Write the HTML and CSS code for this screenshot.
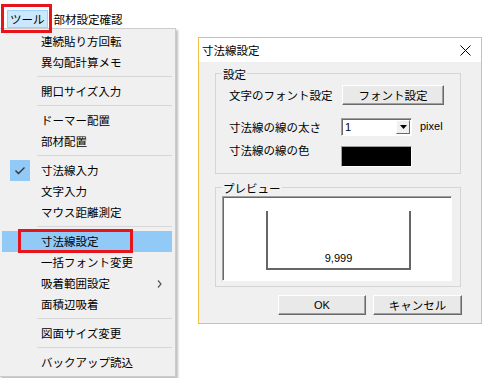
FILE: index.html
```html
<!DOCTYPE html>
<html lang="ja">
<head>
    <meta charset="UTF-8">
    <meta name="viewport" content="width=device-width, initial-scale=1.0">
    <title>寸法線設定</title>
    <link rel="stylesheet" href="styles.css">
</head>
<body>
    <div class="screen">
        <div class="menu-area">
            <div class="menubar">
                <div class="mb-item active">ツール</div>
                <div class="mb-item">部材設定確認</div>
            </div>
            <div class="mark mark-menubar"></div>

            <div class="menu">
                <div class="mi"><span class="mi-icon"></span>連続貼り方回転</div>
                <div class="mi"><span class="mi-icon"></span>異勾配計算メモ</div>
                <div class="sep"></div>
                <div class="mi"><span class="mi-icon"></span>開口サイズ入力</div>
                <div class="sep"></div>
                <div class="mi"><span class="mi-icon"></span>ドーマー配置</div>
                <div class="mi"><span class="mi-icon"></span>部材配置</div>
                <div class="sep"></div>
                <div class="mi">
                    <span class="mi-icon checked">
                        <svg width="20" height="21" viewBox="0 0 20 21"><polyline points="5.5,10.5 8.5,13.5 14.5,7.5" fill="none" stroke="#333" stroke-width="1.4"/></svg>
                    </span>寸法線入力
                </div>
                <div class="mi"><span class="mi-icon"></span>文字入力</div>
                <div class="mi"><span class="mi-icon"></span>マウス距離測定</div>
                <div class="sep"></div>
                <div class="mi hover"><span class="mi-icon"></span>寸法線設定<span class="mark mark-item"></span></div>
                <div class="mi"><span class="mi-icon"></span>一括フォント変更</div>
                <div class="mi">
                    <span class="mi-icon"></span>吸着範囲設定
                    <svg class="mi-arrow" width="5" height="8" viewBox="0 0 5 8"><polyline points="1,0.5 4,4 1,7.5" fill="none" stroke="#555" stroke-width="1.2"/></svg>
                </div>
                <div class="mi"><span class="mi-icon"></span>面積辺吸着</div>
                <div class="sep"></div>
                <div class="mi"><span class="mi-icon"></span>図面サイズ変更</div>
                <div class="sep"></div>
                <div class="mi"><span class="mi-icon"></span>バックアップ読込</div>
            </div>
        </div>

        <div class="dialog">
            <div class="titlebar">
                <span class="title">寸法線設定</span>
                <svg class="close" width="11" height="11" viewBox="0 0 11 11"><path d="M0.5 0.5 L10.5 10.5 M10.5 0.5 L0.5 10.5" stroke="#000" stroke-width="1"/></svg>
            </div>
            <div class="dlg-body">
                <div class="group group-settings">
                    <div class="group-title">設定</div>
                    <div class="row row-font">
                        <span class="row-label">文字のフォント設定</span>
                        <div class="btn btn-font">フォント設定</div>
                    </div>
                    <div class="row row-width">
                        <span class="row-label">寸法線の線の太さ</span>
                        <div class="combo">
                            <span class="combo-value">1</span>
                            <span class="combo-btn">
                                <svg width="7" height="4" viewBox="0 0 7 4"><polygon points="0,0 7,0 3.5,4" fill="#000"/></svg>
                            </span>
                        </div>
                        <span class="unit">pixel</span>
                    </div>
                    <div class="row row-color">
                        <span class="row-label">寸法線の線の色</span>
                        <div class="swatch"></div>
                    </div>
                </div>

                <div class="group group-preview">
                    <div class="group-title">プレビュー</div>
                    <div class="preview">
                        <div class="dim-bracket">9,999</div>
                    </div>
                </div>

                <div class="actions">
                    <div class="btn btn-ok">OK</div>
                    <div class="btn btn-cancel">キャンセル</div>
                </div>
            </div>
        </div>
    </div>
</body>
</html>
```

FILE: styles.css
```css
body {
    margin: 0;
    background-color: #fff;
    font-family: "Noto Sans CJK JP", "Liberation Sans", sans-serif;
    font-size: 11.5px;
    color: #000;
}
.screen {
    display: flex;
    align-items: flex-start;
    width: 482px;
    height: 378px;
    overflow: hidden;
}

/* menu bar + dropdown */
.menu-area {
    position: relative;
    width: 176px;
}
.menubar {
    display: flex;
    height: 28px;
    padding: 10px 0 0 7px;
    box-sizing: border-box;
}
.mb-item {
    height: 18px;
    line-height: 18px;
    padding: 0 6px;
}
.mb-item.active {
    padding: 0 3px;
    background-color: #cce8ff;
    box-shadow: inset 0 0 0 1px #99d1ff;
}
.mark {
    position: absolute;
    border: 3px solid #e8141b;
    box-sizing: border-box;
    z-index: 2;
}
.mark-menubar {
    left: 1px;
    top: 4px;
    width: 51px;
    height: 29px;
}
.menu {
    width: 177px;
    margin-left: -1px;
    padding: 2px 0 3px;
    background-color: #f0f0f0;
    border: 1px solid #cccccc;
    box-sizing: border-box;
    box-shadow: 2px 2px 2px rgba(0, 0, 0, 0.25);
}
.mi {
    position: relative;
    display: flex;
    align-items: center;
    height: 21px;
    margin: 0 3px 0 2px;
    line-height: 21px;
}
.mi.hover {
    background-color: #91c9f7;
}
.mi-icon {
    display: block;
    width: 20px;
    height: 21px;
    margin: 0 11px 0 8px;
}
.mi-icon.checked {
    background-color: #91c9f7;
}
.mi-icon svg {
    display: block;
}
.mi-arrow {
    margin: 0 10px 0 auto;
}
.mark-item {
    left: 16px;
    top: -2px;
    width: 115px;
    height: 24px;
}
.sep {
    height: 1px;
    margin: 3px 3px 4px 37px;
    background-color: #d7d7d7;
}

/* dialog */
.dialog {
    width: 284px;
    height: 287px;
    margin: 37px 0 0 22px;
    border: 1px solid #f2c046;
    box-sizing: border-box;
    background-color: #f0f0f0;
}
.titlebar {
    display: flex;
    align-items: center;
    height: 24px;
    padding: 0 10px 0 3px;
    background-color: #fff;
}
.title {
    flex: 1;
}
.dlg-body {
    padding: 11px 20px 0 16px;
}
.group {
    border: 1px solid #d5d5d5;
}
.group-title {
    width: fit-content;
    margin-top: -8px;
    padding: 0 1px;
    line-height: 16px;
    background-color: #f0f0f0;
}
.group-settings {
    padding: 0 0 6px 13px;
}
.group-settings .group-title {
    margin-left: -7px;
}
.row {
    display: flex;
    align-items: center;
}
.row-label {
    width: 112px;
    line-height: 16px;
}
.row-font {
    height: 20px;
    margin-top: 3px;
}
.row-width {
    height: 18px;
    margin-top: 13px;
}
.row-color {
    align-items: flex-start;
    height: 21px;
    margin-top: 10px;
}
.row-color .row-label {
    margin-top: -4px;
}

.btn {
    display: flex;
    align-items: center;
    justify-content: center;
    height: 20px;
    box-sizing: border-box;
    background-color: #e9e9e9;
    border: 1px solid;
    border-color: #fff #696969 #696969 #fff;
    box-shadow: inset -1px -1px 0 #a0a0a0;
}
.btn-font {
    width: 102px;
    margin-left: 1px;
}
.combo {
    display: flex;
    align-items: center;
    width: 71px;
    height: 18px;
    box-sizing: border-box;
    background-color: #fff;
    border: 1px solid;
    border-color: #a0a0a0 #fff #fff #a0a0a0;
    box-shadow: inset 1px 1px 0 #696969;
}
.combo-value {
    flex: 1;
    padding-left: 3px;
    font-family: "Liberation Sans", sans-serif;
    font-size: 11px;
}
.combo-btn {
    display: flex;
    align-items: center;
    justify-content: center;
    width: 14px;
    height: 14px;
    margin-right: 1px;
    box-sizing: border-box;
    background-color: #f0f0f0;
    border: 1px solid;
    border-color: #fff #696969 #696969 #fff;
}
.combo-btn svg {
    display: block;
}
.unit {
    margin: -3px 0 0 8px;
    font-family: "Liberation Sans", sans-serif;
    font-size: 11px;
}
.swatch {
    width: 71px;
    height: 21px;
    box-sizing: border-box;
    background-color: #000;
    border: 1px solid;
    border-color: #a0a0a0 #fff #fff #a0a0a0;
}

.group-preview {
    margin-top: 13px;
    padding: 0 8px 5px 6px;
}
.preview {
    height: 85px;
    box-sizing: border-box;
    padding: 14px 0 0 43px;
    background-color: #fff;
    border: 1px solid;
    border-color: #a0a0a0 #fff #fff #a0a0a0;
    box-shadow: inset 1px 1px 0 #696969;
}
.dim-bracket {
    display: flex;
    align-items: flex-end;
    justify-content: center;
    width: 145px;
    height: 59px;
    box-sizing: border-box;
    padding-bottom: 3px;
    border: 2px solid #666;
    border-top: none;
    font-family: "Liberation Sans", sans-serif;
    font-size: 11px;
    line-height: 13px;
}

.actions {
    display: flex;
    justify-content: flex-end;
    gap: 7px;
    margin: 8px -1px 0 0;
}
.btn-ok {
    width: 88px;
    font-family: "Liberation Sans", sans-serif;
    font-size: 11px;
}
.btn-cancel {
    width: 89px;
}
```
